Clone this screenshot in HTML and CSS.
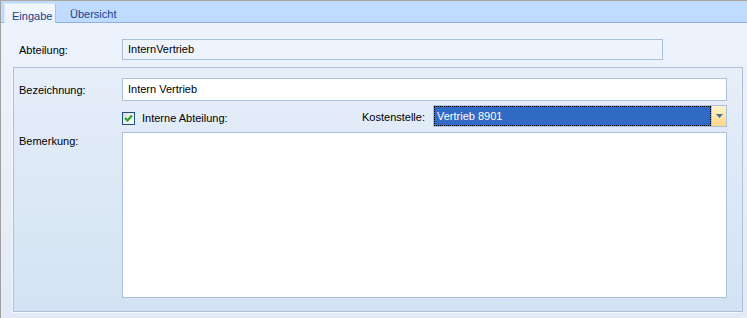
FILE: index.html
```html
<!DOCTYPE html>
<html lang="de">
<head>
    <meta charset="UTF-8">
    <title>Abteilung</title>
    <link rel="stylesheet" href="styles.css">
</head>
<body>
    <div class="window">
        <div class="tab-strip">
            <div class="tab active">Eingabe</div>
            <div class="tab">Übersicht</div>
        </div>
        <div class="content">
            <div class="row top-row">
                <label class="label">Abteilung:</label>
                <div class="textbox readonly">InternVertrieb</div>
            </div>
            <div class="group">
                <div class="row">
                    <label class="label">Bezeichnung:</label>
                    <div class="textbox wide">Intern Vertrieb</div>
                </div>
                <div class="row check-row">
                    <span class="label"></span>
                    <div class="check-field">
                        <span class="checkbox">
                            <svg width="9" height="9" viewBox="0 0 9 9">
                                <path d="M1 4 L3.5 6.5 L8 1.5" fill="none" stroke="#21a121" stroke-width="2"/>
                            </svg>
                        </span>
                        <span class="check-label">Interne Abteilung:</span>
                    </div>
                    <span class="cost-label">Kostenstelle:</span>
                    <div class="combo">
                        <div class="combo-value"><span>Vertrieb 8901</span></div>
                        <div class="combo-button">
                            <svg width="7" height="4" viewBox="0 0 7 4"><path d="M0 0 H7 L3.5 4 Z" fill="#4d6c9c"/></svg>
                        </div>
                    </div>
                </div>
                <div class="row memo-row">
                    <label class="label">Bemerkung:</label>
                    <div class="memo"></div>
                </div>
            </div>
        </div>
    </div>
</body>
</html>
```

FILE: styles.css
```css
body {
    margin: 0;
    font-family: "Liberation Sans", Arial, sans-serif;
    font-size: 11px;
    color: #000;
}

.window {
    width: 746px;
    height: 317px;
    border-top: 1px solid #aca899;
    border-left: 1px solid #a0a0a0;
    background: linear-gradient(#eef4fd, #e2eaf7);
    display: flex;
    flex-direction: column;
}

.tab-strip {
    height: 21px;
    background: #bfdbff;
    border-bottom: 1px solid #8db2e3;
    display: flex;
    align-items: flex-end;
    padding-left: 3px;
}

.tab {
    color: #15428b;
    padding: 0 7px 1px 7px;
    line-height: 14px;
}

.tab.active {
    height: 20px;
    box-sizing: border-box;
    margin-bottom: -1px;
    padding: 5px 6px 0 7px;
    width: 52px;
    background: linear-gradient(#f3f7fd, #e9f1fc);
    border: 1px solid #d8e6f8;
    border-bottom: none;
    border-right-color: #a9c4e8;
    border-radius: 2px 2px 0 0;
    margin-right: 7px;
}

.content {
    padding: 16px 0 0 12px;
}

.row {
    display: flex;
    align-items: center;
}

.label {
    width: 103px;
    flex-shrink: 0;
}

.top-row {
    padding-left: 6px;
    margin-bottom: 7px;
}

.textbox {
    height: 21px;
    box-sizing: border-box;
    border: 1px solid #abc0dd;
    padding: 0 5px;
    line-height: 19px;
}

.textbox.readonly {
    width: 541px;
    background: #eef4fc;
}

.textbox.wide {
    flex: 1;
    height: 23px;
    line-height: 21px;
    background: #fff;
}

.group {
    width: 730px;
    height: 245px;
    box-sizing: border-box;
    border: 1px solid #aebfd8;
    box-shadow: -1px 1px 0 #f4f8fe;
    background: linear-gradient(#e6eef9, #d3e3f3);
    padding: 10px 15px 0 5px;
    display: flex;
    flex-direction: column;
}

.check-row {
    margin-top: 4px;
    height: 22px;
}

.check-field {
    display: flex;
    align-items: center;
    width: 240px;
    padding-top: 4px;
}

.checkbox {
    width: 13px;
    height: 13px;
    box-sizing: border-box;
    border: 1px solid #1c5180;
    background: linear-gradient(135deg, #dcdcd7, #fff);
    display: flex;
    align-items: center;
    justify-content: center;
    margin-right: 7px;
}

.check-label {
    line-height: 13px;
}

.cost-label {
    width: 71px;
    padding-top: 2px;
}

.combo {
    flex: 1;
    height: 22px;
    box-sizing: border-box;
    border: 1px solid #abc0dd;
    display: flex;
    background: #fff;
}

.combo-value {
    flex: 1;
    background: #316ac5;
    color: #fff;
    border: 1px dotted #f5d37a;
    outline: 1px dotted #000;
    outline-offset: -1px;
    padding: 0 2px;
    line-height: 18px;
}

.combo-button {
    width: 14px;
    background: linear-gradient(#fff3cd, #ffd889);
    border-left: 1px solid #f1c15f;
    display: flex;
    align-items: center;
    justify-content: center;
}

.memo-row {
    align-items: flex-start;
    margin-top: 5px;
}

.memo-row .label {
    padding-top: 3px;
}

.memo {
    flex: 1;
    height: 166px;
    box-sizing: border-box;
    border: 1px solid #abc0dd;
    background: #fff;
}
```
